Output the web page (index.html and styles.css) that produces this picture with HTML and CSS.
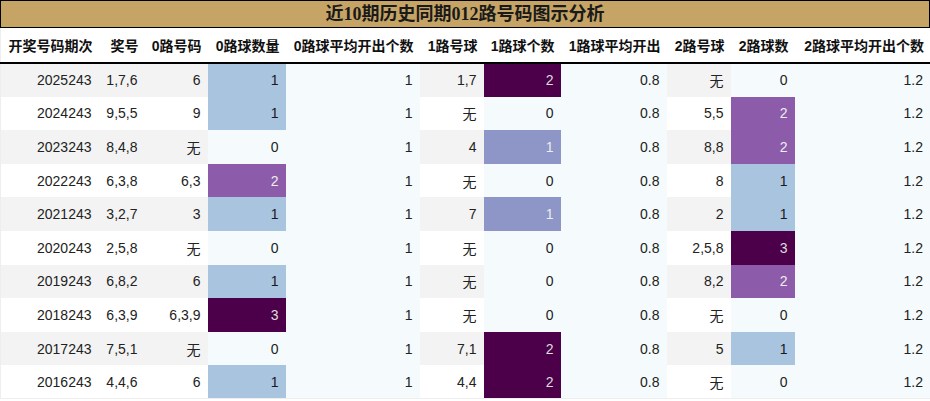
FILE: index.html
```html
<!DOCTYPE html>
<html lang="zh-CN">
<head>
<meta charset="utf-8">
<title>近10期历史同期012路号码图示分析</title>
<link rel="stylesheet" href="styles.css">
</head>
<body>
<div class="page">
  <div class="title">近10期历史同期012路号码图示分析</div>
  <table class="grid">
    <colgroup>
      <col class="w98"><col class="w46"><col class="w63"><col class="w78"><col class="w134">
      <col class="w64"><col class="w77"><col class="w106"><col class="w64"><col class="w64"><col class="w136">
    </colgroup>
    <thead>
      <tr>
        <th>开奖号码期次</th><th>奖号</th><th>0路号码</th><th>0路球数量</th><th>0路球平均开出个数</th>
        <th>1路号球</th><th>1路球个数</th><th>1路球平均开出</th><th>2路号球</th><th>2路球数</th><th>2路球平均开出个数</th>
      </tr>
    </thead>
    <tbody>
      <tr><td>2025243</td><td>1,7,6</td><td>6</td><td class="b1">1</td><td class="lt">1</td><td>1,7</td><td class="dk">2</td><td class="lt">0.8</td><td>无</td><td class="lt">0</td><td class="lt">1.2</td></tr>
      <tr><td>2024243</td><td>9,5,5</td><td>9</td><td class="b1">1</td><td class="lt">1</td><td>无</td><td class="lt">0</td><td class="lt">0.8</td><td>5,5</td><td class="b2">2</td><td class="lt">1.2</td></tr>
      <tr><td>2023243</td><td>8,4,8</td><td>无</td><td class="lt">0</td><td class="lt">1</td><td>4</td><td class="pw">1</td><td class="lt">0.8</td><td>8,8</td><td class="b2">2</td><td class="lt">1.2</td></tr>
      <tr><td>2022243</td><td>6,3,8</td><td>6,3</td><td class="b2">2</td><td class="lt">1</td><td>无</td><td class="lt">0</td><td class="lt">0.8</td><td>8</td><td class="b1">1</td><td class="lt">1.2</td></tr>
      <tr><td>2021243</td><td>3,2,7</td><td>3</td><td class="b1">1</td><td class="lt">1</td><td>7</td><td class="pw">1</td><td class="lt">0.8</td><td>2</td><td class="b1">1</td><td class="lt">1.2</td></tr>
      <tr><td>2020243</td><td>2,5,8</td><td>无</td><td class="lt">0</td><td class="lt">1</td><td>无</td><td class="lt">0</td><td class="lt">0.8</td><td>2,5,8</td><td class="dk">3</td><td class="lt">1.2</td></tr>
      <tr><td>2019243</td><td>6,8,2</td><td>6</td><td class="b1">1</td><td class="lt">1</td><td>无</td><td class="lt">0</td><td class="lt">0.8</td><td>8,2</td><td class="b2">2</td><td class="lt">1.2</td></tr>
      <tr><td>2018243</td><td>6,3,9</td><td>6,3,9</td><td class="dk">3</td><td class="lt">1</td><td>无</td><td class="lt">0</td><td class="lt">0.8</td><td>无</td><td class="lt">0</td><td class="lt">1.2</td></tr>
      <tr><td>2017243</td><td>7,5,1</td><td>无</td><td class="lt">0</td><td class="lt">1</td><td>7,1</td><td class="dk">2</td><td class="lt">0.8</td><td>5</td><td class="b1">1</td><td class="lt">1.2</td></tr>
      <tr><td>2016243</td><td>4,4,6</td><td>6</td><td class="b1">1</td><td class="lt">1</td><td>4,4</td><td class="dk">2</td><td class="lt">0.8</td><td>无</td><td class="lt">0</td><td class="lt">1.2</td></tr>
    </tbody>
  </table>
</div>
</body>
</html>
```

FILE: styles.css
```css
html, body {
  margin: 0;
  padding: 0;
  background: #ffffff;
}

.page {
  width: 930px;
}

.title {
  box-sizing: border-box;
  height: 28px;
  border: 1px solid #000;
  background: #c5a465;
  color: #1a1a1a;
  font-family: "Liberation Serif", "Noto Sans CJK SC", serif;
  font-weight: bold;
  font-size: 18px;
  line-height: 26px;
  text-align: center;
}

.grid {
  width: 930px;
  table-layout: fixed;
  border-collapse: collapse;
  border-left: 1px solid #eeeeee;
  border-right: 1px solid #eeeeee;
  border-bottom: 1px solid #eeeeee;
  font-family: "Liberation Sans", "Noto Sans CJK SC", sans-serif;
  font-size: 14px;
  color: #222222;
}

.w98 { width: 98px; }
.w46 { width: 46px; }
.w63 { width: 63px; }
.w78 { width: 78px; }
.w134 { width: 134px; }
.w64 { width: 64px; }
.w77 { width: 77px; }
.w106 { width: 106px; }
.w136 { width: 136px; }

.grid th {
  height: 34px;
  padding: 0 6px 0 0;
  text-align: right;
  font-weight: bold;
  color: #111111;
  white-space: nowrap;
  background: #ffffff;
  border-bottom: 2px solid #000000;
}

.grid td {
  height: 33.6px;
  padding: 0 7px 0 0;
  text-align: right;
  white-space: nowrap;
  box-sizing: border-box;
}

.grid tbody tr:nth-child(odd) td {
  background: #f3f3f3;
}

.grid tbody tr:nth-child(even) td {
  background: #ffffff;
}

.grid tbody tr td.lt {
  background: #f5fbfc;
}

.grid tbody tr td.b1 {
  background: #a8c4df;
  color: #1a1a1a;
}

.grid tbody tr td.b2 {
  background: #8c5ba9;
  color: #eeeeee;
}

.grid tbody tr td.pw {
  background: #8d96c7;
  color: #eeeeee;
}

.grid tbody tr td.dk {
  background: #4b0049;
  color: #dddddd;
}
```
